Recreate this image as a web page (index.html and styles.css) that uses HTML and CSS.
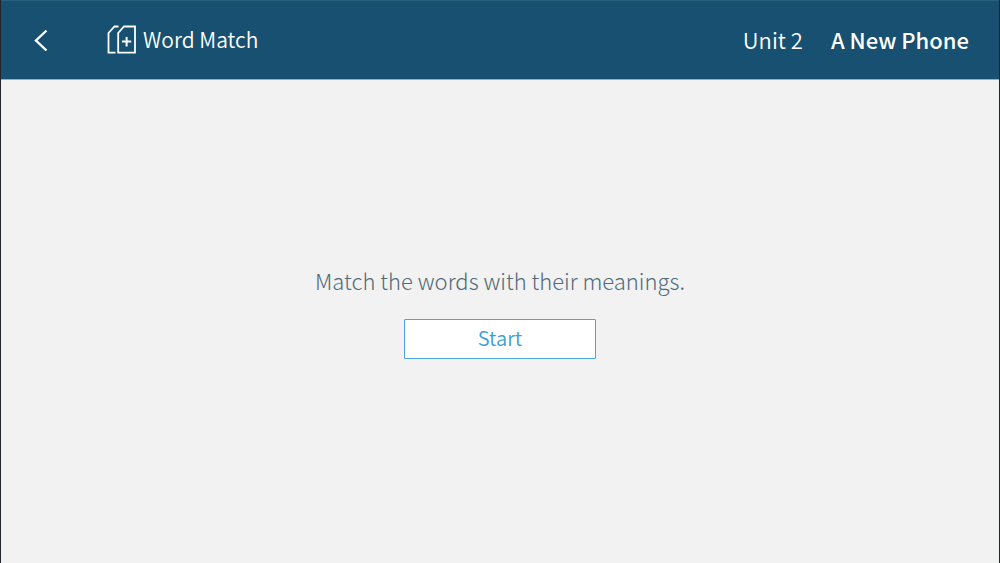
FILE: index.html
```
<!DOCTYPE html>
<html lang="en">
<head>
  <meta charset="UTF-8" />
  <meta name="viewport" content="width=device-width, initial-scale=1" />
  <title>Word Match</title>
  <link rel="stylesheet" href="styles.css">
</head>
<body>
  <header class="top-bar">
    <button class="back-button" type="button" aria-label="Back">
      <svg viewBox="0 0 14 22">
        <polyline points="12.5,1.5 2,11.5 12.5,21.5" fill="none" stroke="#fff" stroke-width="2.4"/>
      </svg>
    </button>
    <!-- Two stacked cards with a plus sign -->
    <svg class="cards-icon" viewBox="0 0 30 30" aria-hidden="true">
      <g fill="none" stroke="#fff" stroke-width="1.8">
        <path d="M11.5 1.5H7.5L1.5 8V27.7H8.5"/>
        <path d="M17 1.5H28V27.7H11.2V8Z"/>
        <path d="M19.6 12V21.4M15 16.6H24.2" stroke-width="2"/>
      </g>
    </svg>
    <h1 class="title">Word Match</h1>
    <div class="lesson">
      <span>Unit 2</span>
      <span class="lesson-name">A New Phone</span>
    </div>
  </header>

  <main class="stage">
    <p class="prompt">Match the words with their meanings.</p>
    <button class="start-button" type="button">Start</button>
  </main>
</body>
</html>
```
FILE: styles.css
```
* {
  box-sizing: border-box;
}
body {
  margin: 0;
  min-height: 100vh;
  display: flex;
  flex-direction: column;
  background: #f2f2f2;
  border: solid #222529;
  border-width: 0 1px;
  font-family: "Noto Sans CJK SC", "Noto Sans", sans-serif;
  font-weight: 350;
  font-size: 22px;
  line-height: 34px;
}
.top-bar {
  display: flex;
  align-items: center;
  height: 80px;
  padding: 0 30px 0 26px;
  background: #175070;
  border-top: 1px solid #285f7c;
  border-bottom: 1px solid #8fb0c0;
  color: #fff;
}
.back-button {
  width: 28px;
  height: 40px;
  padding: 0;
  border: 0;
  background: none;
  cursor: pointer;
}
.back-button svg {
  display: block;
  width: 14px;
  height: 22px;
  margin: 0 auto;
}
.cards-icon {
  width: 30px;
  height: 30px;
  margin-left: 52px;
}
.title {
  margin: 0 0 0 6px;
  padding-bottom: 2px;
  font-size: 21px;
  font-weight: 350;
}
.lesson {
  display: flex;
  gap: 28px;
  margin-left: auto;
  padding-bottom: 2px;
}
.lesson-name {
  font-weight: 500;
}
.stage {
  flex: 1;
  display: flex;
  flex-direction: column;
  align-items: center;
  justify-content: center;
  padding-bottom: 22px;
}
.prompt {
  margin: 0 0 22px;
  color: #4f6a78;
  font-weight: 300;
}
.start-button {
  width: 192px;
  height: 40px;
  padding: 0 0 2px;
  border: 1px solid #4ba7d8;
  border-radius: 1px;
  background: #fff;
  color: #3d9fd3;
  font-family: inherit;
  font-weight: 350;
  font-size: 20px;
  line-height: 34px;
  cursor: pointer;
}
```
